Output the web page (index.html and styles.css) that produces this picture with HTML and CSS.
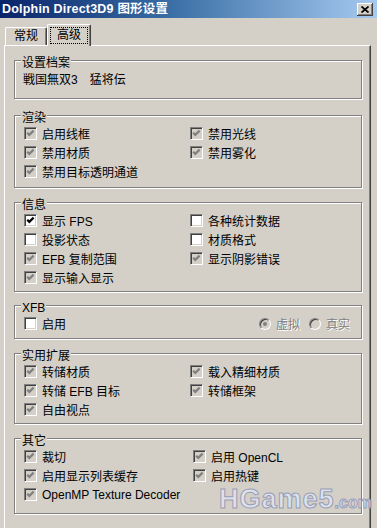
FILE: index.html
```html
<!DOCTYPE html>
<html lang="zh-CN">
<head>
  <meta charset="UTF-8">
  <title>Dolphin Direct3D9 图形设置</title>
  <link rel="stylesheet" href="styles.css">
</head>
<body>
  <div class="window">
    <div class="titlebar">
      <span class="title">Dolphin Direct3D9 图形设置</span>
      <span class="close-btn">
        <svg width="8" height="7" viewBox="0 0 8 7"><path d="M0.5 0.5 L7.5 6.5 M7.5 0.5 L0.5 6.5" stroke="#000" stroke-width="1.7" fill="none"/></svg>
      </span>
    </div>

    <div class="tabs">
      <div class="tab">常规</div>
      <div class="tab active"><span class="tab-focus">高级</span></div>
    </div>

    <div class="panel">
      <div class="group profile">
        <div class="caption">设置档案</div>
        <div class="profile-name">戦国無双3　猛将伝</div>
      </div>

      <div class="group render">
        <div class="caption">渲染</div>
        <div class="options">
          <div class="opt"><span class="box off-check"><svg viewBox="0 0 13 13"><polyline points="3.2,5.8 5.3,7.9 9.6,3.6"/></svg></span>启用线框</div>
          <div class="opt"><span class="box off-check"><svg viewBox="0 0 13 13"><polyline points="3.2,5.8 5.3,7.9 9.6,3.6"/></svg></span>禁用光线</div>
          <div class="opt"><span class="box off-check"><svg viewBox="0 0 13 13"><polyline points="3.2,5.8 5.3,7.9 9.6,3.6"/></svg></span>禁用材质</div>
          <div class="opt"><span class="box off-check"><svg viewBox="0 0 13 13"><polyline points="3.2,5.8 5.3,7.9 9.6,3.6"/></svg></span>禁用雾化</div>
          <div class="opt"><span class="box off-check"><svg viewBox="0 0 13 13"><polyline points="3.2,5.8 5.3,7.9 9.6,3.6"/></svg></span>禁用目标透明通道</div>
        </div>
      </div>

      <div class="group info">
        <div class="caption">信息</div>
        <div class="options">
          <div class="opt"><span class="box on-check"><svg viewBox="0 0 13 13"><polyline points="3.2,5.8 5.3,7.9 9.6,3.6"/></svg></span>显示 FPS</div>
          <div class="opt"><span class="box"></span>各种统计数据</div>
          <div class="opt"><span class="box"></span>投影状态</div>
          <div class="opt"><span class="box"></span>材质格式</div>
          <div class="opt"><span class="box off-check"><svg viewBox="0 0 13 13"><polyline points="3.2,5.8 5.3,7.9 9.6,3.6"/></svg></span>EFB 复制范围</div>
          <div class="opt"><span class="box off-check"><svg viewBox="0 0 13 13"><polyline points="3.2,5.8 5.3,7.9 9.6,3.6"/></svg></span>显示阴影错误</div>
          <div class="opt"><span class="box off-check"><svg viewBox="0 0 13 13"><polyline points="3.2,5.8 5.3,7.9 9.6,3.6"/></svg></span>显示输入显示</div>
        </div>
      </div>

      <div class="group xfb">
        <div class="caption">XFB</div>
        <div class="xfb-row">
          <div class="opt"><span class="box"></span>启用</div>
          <div class="radios">
            <span class="radio selected"></span><span class="dim">虚拟</span>
            <span class="radio"></span><span class="dim">真实</span>
          </div>
        </div>
      </div>

      <div class="group utility">
        <div class="caption">实用扩展</div>
        <div class="options">
          <div class="opt"><span class="box off-check"><svg viewBox="0 0 13 13"><polyline points="3.2,5.8 5.3,7.9 9.6,3.6"/></svg></span>转储材质</div>
          <div class="opt"><span class="box off-check"><svg viewBox="0 0 13 13"><polyline points="3.2,5.8 5.3,7.9 9.6,3.6"/></svg></span>载入精细材质</div>
          <div class="opt"><span class="box off-check"><svg viewBox="0 0 13 13"><polyline points="3.2,5.8 5.3,7.9 9.6,3.6"/></svg></span>转储 EFB 目标</div>
          <div class="opt"><span class="box off-check"><svg viewBox="0 0 13 13"><polyline points="3.2,5.8 5.3,7.9 9.6,3.6"/></svg></span>转储框架</div>
          <div class="opt"><span class="box off-check"><svg viewBox="0 0 13 13"><polyline points="3.2,5.8 5.3,7.9 9.6,3.6"/></svg></span>自由视点</div>
        </div>
      </div>

      <div class="group other">
        <div class="caption">其它</div>
        <div class="options">
          <div class="opt"><span class="box off-check"><svg viewBox="0 0 13 13"><polyline points="3.2,5.8 5.3,7.9 9.6,3.6"/></svg></span>裁切</div>
          <div class="opt"><span class="box off-check"><svg viewBox="0 0 13 13"><polyline points="3.2,5.8 5.3,7.9 9.6,3.6"/></svg></span>启用 OpenCL</div>
          <div class="opt"><span class="box off-check"><svg viewBox="0 0 13 13"><polyline points="3.2,5.8 5.3,7.9 9.6,3.6"/></svg></span>启用显示列表缓存</div>
          <div class="opt"><span class="box off-check"><svg viewBox="0 0 13 13"><polyline points="3.2,5.8 5.3,7.9 9.6,3.6"/></svg></span>启用热键</div>
          <div class="opt"><span class="box off-check"><svg viewBox="0 0 13 13"><polyline points="3.2,5.8 5.3,7.9 9.6,3.6"/></svg></span>OpenMP Texture Decoder</div>
        </div>
      </div>
    </div>

    <div class="watermark">HGame5<small>.com</small></div>
  </div>
</body>
</html>
```

FILE: styles.css
```css
/* Classic Windows dialog */
* {
  margin: 0;
  padding: 0;
  box-sizing: border-box;
}

body {
  width: 377px;
  height: 528px;
  overflow: hidden;
  background: #d4d0c8;
  font-family: 'Liberation Sans', 'Noto Sans CJK SC', sans-serif;
  font-size: 12px;
  color: #000;
}

.window {
  position: relative;
  height: 528px;
}

/* Title bar */
.titlebar {
  height: 18px;
  display: flex;
  align-items: center;
  background: linear-gradient(to right, #0a246a, #3a6ea5 45%, #a6caf0);
  color: #fff;
}

.titlebar .title {
  padding-left: 2px;
  font-weight: bold;
  font-size: 12.5px;
  letter-spacing: 0.2px;
  line-height: 18px;
}

.close-btn {
  margin-left: auto;
  margin-right: 4px;
  width: 16px;
  height: 13px;
  display: flex;
  align-items: center;
  justify-content: center;
  background: #d4d0c8;
  box-shadow: inset -1px -1px #404040, inset 1px 1px #fff, inset -2px -2px #808080;
}

/* Tabs */
.tabs {
  height: 27px;
  display: flex;
  align-items: flex-end;
  padding-left: 5px;
}

.tab {
  position: relative;
  height: 18px;
  padding: 0 8px 0 8px;
  line-height: 17px;
  border-top: 1px solid #fff;
  border-left: 1px solid #fff;
  border-right: 1px solid #404040;
  box-shadow: inset -1px 0 #808080;
  border-radius: 2px 2px 0 0;
}

.tab.active {
  z-index: 1;
  height: 22px;
  margin-bottom: -1px;
  padding: 2px 2px 0 2px;
  background: #d4d0c8;
}

.tab-focus {
  display: block;
  height: 17px;
  padding: 0 6px;
  line-height: 15px;
  border: 1px dotted #000;
}

/* Tab page */
.panel {
  margin-left: 4px;
  width: 367px;
  height: 500px;
  padding: 14px 8px 0 9px;
  border-top: 1px solid #fff;
  border-left: 1px solid #fff;
  border-right: 1px solid #404040;
  box-shadow: inset -1px 0 #808080;
}

/* Group boxes */
.group {
  border: 1px solid #808080;
  box-shadow: inset 1px 1px #fff, 1px 1px #fff;
  padding-left: 8px;
}

.caption {
  width: fit-content;
  margin: -4px 0 0 -2px;
  padding: 0 1px;
  height: 12px;
  line-height: 12px;
  background: #d4d0c8;
}

.profile {
  padding-bottom: 8px;
}

.profile-name {
  margin-top: 2px;
  height: 19px;
  line-height: 19px;
}

.render {
  margin-top: 16px;
  padding-bottom: 6px;
}

.info {
  margin-top: 14px;
  padding-bottom: 4px;
}

.xfb {
  margin-top: 13px;
  padding-bottom: 5px;
}

.utility {
  margin-top: 14px;
  padding-bottom: 4px;
}

.other {
  margin-top: 14px;
  padding-bottom: 9px;
}

.options {
  display: grid;
  grid-template-columns: 166px 1fr;
  grid-auto-rows: 19px;
}

.other .options {
  grid-template-columns: 169px 1fr;
}

.opt {
  display: flex;
  align-items: center;
  gap: 5px;
  padding-left: 1px;
  white-space: nowrap;
}

/* Checkboxes */
.box {
  flex: none;
  width: 13px;
  height: 13px;
  background: #fff;
  border-top: 1px solid #808080;
  border-left: 1px solid #808080;
  border-bottom: 1px solid #fff;
  border-right: 1px solid #fff;
  box-shadow: inset 1px 1px #404040, inset -1px -1px #d4d0c8;
}

.box svg {
  display: block;
  width: 13px;
  height: 13px;
  margin: -1px 0 0 -1px;
}

.box polyline {
  fill: none;
  stroke-width: 2.2;
  stroke: #000;
}

.box.off-check {
  background: #d4d0c8;
}

.box.off-check polyline {
  stroke: #808080;
}

/* XFB row */
.xfb-row {
  display: flex;
  align-items: center;
  height: 19px;
}

.radios {
  margin-left: auto;
  margin-right: 11px;
  display: flex;
  align-items: center;
}

.radio {
  width: 12px;
  height: 12px;
  margin-right: 5px;
  border-radius: 50%;
  background: #d4d0c8;
  border-top: 1px solid #808080;
  border-left: 1px solid #808080;
  border-bottom: 1px solid #fff;
  border-right: 1px solid #fff;
  box-shadow: inset 1px 1px #404040;
  display: flex;
  align-items: center;
  justify-content: center;
}

.radio.selected::after {
  content: "";
  width: 4px;
  height: 4px;
  border-radius: 50%;
  background: #808080;
}

.dim {
  color: #808080;
  text-shadow: 1px 1px #fff;
  margin-right: 9px;
}

.dim:last-child {
  margin-right: 0;
}

/* Watermark */
.watermark {
  position: absolute;
  left: 219px;
  top: 484px;
  font-family: 'Liberation Sans', sans-serif;
  font-weight: bold;
  font-size: 27px;
  letter-spacing: 1px;
  color: #e2e5f0;
  opacity: 0.85;
  -webkit-text-stroke: 1px #8c95b6;
}

.watermark small {
  font-size: 16px;
  letter-spacing: 0;
}
```
